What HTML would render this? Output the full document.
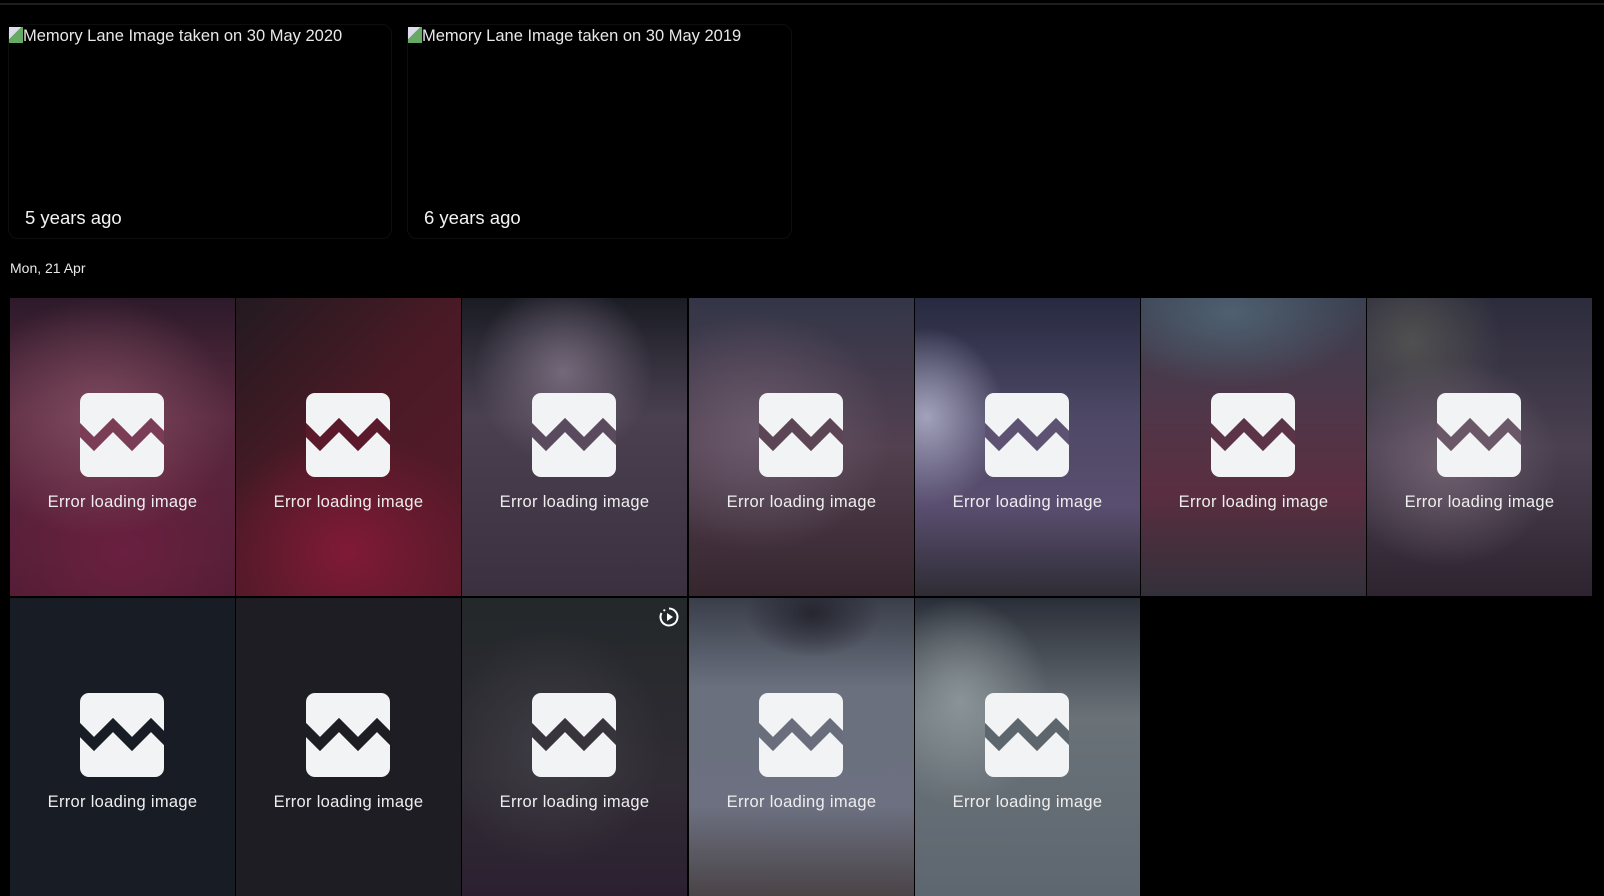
<!DOCTYPE html>
<html><head><meta charset="utf-8"><style>
*{margin:0;padding:0;box-sizing:border-box}
body{width:1604px;height:861px;background:#000;overflow:hidden;position:relative;font-family:"Liberation Sans",sans-serif;color:#eee}
.topline{position:absolute;left:0;top:3px;width:1604px;height:2px;background:#1e1e1e}
.card{position:absolute;top:24px;height:215px;border:1px solid #0e0e0e;border-radius:10px;background:#000}
.alt{position:absolute;left:0;top:2px;font-size:16.5px;color:#e8e8e8;white-space:nowrap}
.alt i{display:inline-block;width:14px;height:16px;vertical-align:-2px;background:linear-gradient(135deg,#dde 40%,#6a6 41%)}
.ago{position:absolute;left:16px;top:182px;font-size:18.5px;color:#f2f2f2}
.date{position:absolute;left:10px;top:260px;font-size:14px;color:#e8e8e8}
.t{position:absolute;width:225px;height:298px;overflow:hidden}
.t svg{position:absolute;left:70px;top:95px}
.t span{position:absolute;left:0;width:100%;text-align:center;top:195px;font-size:16.5px;color:#eee;letter-spacing:.3px}
</style></head><body>
<div class="topline"></div>
<div class="card" style="left:8px;width:384px"><div class="alt"><i></i>Memory Lane Image taken on 30 May 2020</div><div class="ago">5 years ago</div></div>
<div class="card" style="left:407px;width:385px"><div class="alt"><i></i>Memory Lane Image taken on 30 May 2019</div><div class="ago">6 years ago</div></div>
<div class="date">Mon, 21 Apr</div>

<div class="t" style="left:10px;top:298px;background:radial-gradient(ellipse 60% 40% at 40% 40%,#7e4a5e,transparent),radial-gradient(ellipse 80% 50% at 50% 85%,#6a2040,transparent),linear-gradient(#2c1a2a,#5a2a40 40%,#4a1c30)"><svg width="84" height="84"><rect width="84" height="84" rx="9" fill="#f2f3f5"/><polyline points="-4,33 14,51 33,32 52,51 71,32 88,49" fill="none" stroke="#7a3d55" stroke-width="10"/></svg><span>Error loading image</span></div>
<div class="t" style="left:236px;top:298px;background:radial-gradient(ellipse 60% 40% at 50% 85%,#801a36,transparent),linear-gradient(135deg,#231a20,#4a1a26 45%,#5a1a2a)"><svg width="84" height="84"><rect width="84" height="84" rx="9" fill="#f2f3f5"/><polyline points="-4,33 14,51 33,32 52,51 71,32 88,49" fill="none" stroke="#5a1a2c" stroke-width="10"/></svg><span>Error loading image</span></div>
<div class="t" style="left:462px;top:298px;background:radial-gradient(ellipse 40% 30% at 45% 25%,#74687a,transparent),linear-gradient(#1a1c24,#4a4050 40%,#3a3040)"><svg width="84" height="84"><rect width="84" height="84" rx="9" fill="#f2f3f5"/><polyline points="-4,33 14,51 33,32 52,51 71,32 88,49" fill="none" stroke="#5a4a5e" stroke-width="10"/></svg><span>Error loading image</span></div>
<div class="t" style="left:689px;top:298px;background:radial-gradient(ellipse 60% 40% at 30% 45%,#6a5a6c,transparent),linear-gradient(#333648,#534050 50%,#35262e)"><svg width="84" height="84"><rect width="84" height="84" rx="9" fill="#f2f3f5"/><polyline points="-4,33 14,51 33,32 52,51 71,32 88,49" fill="none" stroke="#5c4656" stroke-width="10"/></svg><span>Error loading image</span></div>
<div class="t" style="left:915px;top:298px;background:radial-gradient(ellipse 35% 30% at 5% 40%,#a2a2bc,transparent),linear-gradient(#262a40,#4e4866 40%,#5a4e70 70%,#2e2c34)"><svg width="84" height="84"><rect width="84" height="84" rx="9" fill="#f2f3f5"/><polyline points="-4,33 14,51 33,32 52,51 71,32 88,49" fill="none" stroke="#5e5272" stroke-width="10"/></svg><span>Error loading image</span></div>
<div class="t" style="left:1141px;top:298px;background:radial-gradient(ellipse 60% 25% at 40% 5%,#4e6070,transparent),linear-gradient(#3a4050,#503648 40%,#5a2e40 65%,#33303a)"><svg width="84" height="84"><rect width="84" height="84" rx="9" fill="#f2f3f5"/><polyline points="-4,33 14,51 33,32 52,51 71,32 88,49" fill="none" stroke="#5c3448" stroke-width="10"/></svg><span>Error loading image</span></div>
<div class="t" style="left:1367px;top:298px;background:radial-gradient(ellipse 50% 35% at 35% 55%,#706070,transparent),radial-gradient(ellipse 40% 30% at 20% 15%,#505050,transparent),linear-gradient(#2c2c3c,#4a4050 50%,#2e2430)"><svg width="84" height="84"><rect width="84" height="84" rx="9" fill="#f2f3f5"/><polyline points="-4,33 14,51 33,32 52,51 71,32 88,49" fill="none" stroke="#6a5868" stroke-width="10"/></svg><span>Error loading image</span></div>

<div class="t" style="left:10px;top:598px;background:#181c24"><svg width="84" height="84"><rect width="84" height="84" rx="9" fill="#f2f3f5"/><polyline points="-4,33 14,51 33,32 52,51 71,32 88,49" fill="none" stroke="#181c24" stroke-width="10"/></svg><span>Error loading image</span></div>
<div class="t" style="left:236px;top:598px;background:#1f1d24"><svg width="84" height="84"><rect width="84" height="84" rx="9" fill="#f2f3f5"/><polyline points="-4,33 14,51 33,32 52,51 71,32 88,49" fill="none" stroke="#1f1d24" stroke-width="10"/></svg><span>Error loading image</span></div>
<div class="t" style="left:462px;top:598px;background:radial-gradient(ellipse 50% 40% at 40% 50%,#3e3c44,transparent),linear-gradient(#23282a,#302c34 60%,#2c2030)"><svg width="84" height="84"><rect width="84" height="84" rx="9" fill="#f2f3f5"/><polyline points="-4,33 14,51 33,32 52,51 71,32 88,49" fill="none" stroke="#37343c" stroke-width="10"/></svg><svg style="left:196px;top:8px" width="22" height="22" viewBox="0 0 22 22"><path d="M11 2.5A8.5 8.5 0 1 1 3.5 7" fill="none" stroke="#fff" stroke-width="2"/><circle cx="6.3" cy="4.3" r="1.1" fill="#fff"/><path d="M9 7v8l6-4z" fill="#fff"/></svg><span>Error loading image</span></div>
<div class="t" style="left:689px;top:598px;background:radial-gradient(ellipse 30% 15% at 55% 5%,#262630,transparent),linear-gradient(#3a3e4a,#6a707e 30%,#6c7080 70%,#4a4448)"><svg width="84" height="84"><rect width="84" height="84" rx="9" fill="#f2f3f5"/><polyline points="-4,33 14,51 33,32 52,51 71,32 88,49" fill="none" stroke="#6a6e7c" stroke-width="10"/></svg><span>Error loading image</span></div>
<div class="t" style="left:915px;top:598px;background:radial-gradient(ellipse 40% 35% at 20% 35%,#8a9498,transparent),linear-gradient(#2a2e38,#6a7278 40%,#5e6670)"><svg width="84" height="84"><rect width="84" height="84" rx="9" fill="#f2f3f5"/><polyline points="-4,33 14,51 33,32 52,51 71,32 88,49" fill="none" stroke="#5c666c" stroke-width="10"/></svg><span>Error loading image</span></div>
</body></html>
